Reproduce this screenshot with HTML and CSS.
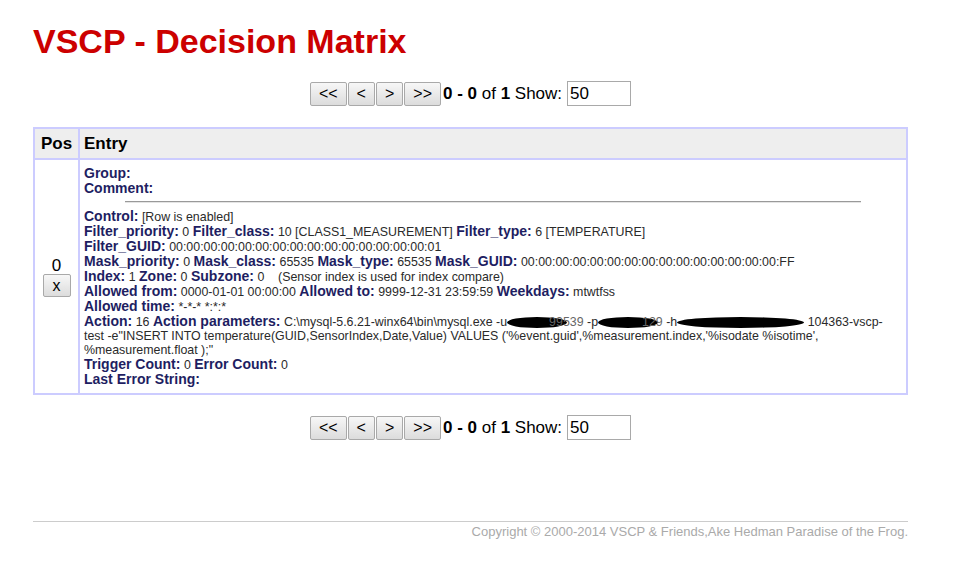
FILE: index.html
```html
<!DOCTYPE html>
<html>
<head>
<meta charset="utf-8">
<link rel="stylesheet" href="styles.css">
</head>
<body>
<div class="page">
  <h1 class="title">VSCP - Decision Matrix</h1>

  <div class="nav">
    <button class="btn">&lt;&lt;</button>
    <button class="btn">&lt;</button>
    <button class="btn">&gt;</button>
    <button class="btn">&gt;&gt;</button>
    <span class="navtext"><b>0 - 0</b> of <b>1</b> Show:</span>
    <input class="count" type="text" value="50">
  </div>

  <table class="matrix">
    <thead>
      <tr><th class="pos">Pos</th><th class="entry">Entry</th></tr>
    </thead>
    <tbody>
      <tr>
        <td class="pos">
          <div class="posnum">0</div>
          <button class="btn del">x</button>
        </td>
        <td class="entry">
          <div class="line"><b>Group:</b></div>
          <div class="line"><b>Comment:</b></div>
          <hr class="sep">
          <div class="line"><b>Control:</b> <span class="v">[Row is enabled]</span></div>
          <div class="line"><b>Filter_priority:</b> <span class="v">0</span> <b>Filter_class:</b> <span class="v">10 [CLASS1_MEASUREMENT]</span> <b>Filter_type:</b> <span class="v">6 [TEMPERATURE]</span></div>
          <div class="line"><b>Filter_GUID:</b> <span class="v">00:00:00:00:00:00:00:00:00:00:00:00:00:00:00:01</span></div>
          <div class="line"><b>Mask_priority:</b> <span class="v">0</span> <b>Mask_class:</b> <span class="v">65535</span> <b>Mask_type:</b> <span class="v">65535</span> <b>Mask_GUID:</b> <span class="v">00:00:00:00:00:00:00:00:00:00:00:00:00:00:00:FF</span></div>
          <div class="line"><b>Index:</b> <span class="v">1</span> <b>Zone:</b> <span class="v">0</span> <b>Subzone:</b> <span class="v">0 &nbsp;&nbsp; (Sensor index is used for index compare)</span></div>
          <div class="line"><b>Allowed from:</b> <span class="v">0000-01-01 00:00:00</span> <b>Allowed to:</b> <span class="v">9999-12-31 23:59:59</span> <b>Weekdays:</b> <span class="v">mtwtfss</span></div>
          <div class="line"><b>Allowed time:</b> <span class="v">*-*-* *:*:*</span></div>
          <div class="line"><b>Action:</b> <span class="v">16</span> <b>Action parameters:</b> <span class="v">C:\mysql-5.6.21-winx64\bin\mysql.exe -u<span class="blk"><span class="redact r1"></span><span class="faint">99539</span></span> -p<span class="blk"><span class="redact r2"></span><span class="faint">129</span></span> -h<span class="redact r3"></span> 104363-vscp-<br>test -e"INSERT INTO temperature(GUID,SensorIndex,Date,Value) VALUES ('%event.guid',%measurement.index,'%isodate %isotime',<br>%measurement.float );"</span></div>
          <div class="line"><b>Trigger Count:</b> <span class="v">0</span> <b>Error Count:</b> <span class="v">0</span></div>
          <div class="line"><b>Last Error String:</b></div>
        </td>
      </tr>
    </tbody>
  </table>

  <div class="nav nav-bottom">
    <button class="btn">&lt;&lt;</button>
    <button class="btn">&lt;</button>
    <button class="btn">&gt;</button>
    <button class="btn">&gt;&gt;</button>
    <span class="navtext"><b>0 - 0</b> of <b>1</b> Show:</span>
    <input class="count" type="text" value="50">
  </div>

  <footer class="footer">
    <div class="copy">Copyright © 2000-2014 VSCP &amp; Friends,Ake Hedman Paradise of the Frog.</div>
  </footer>
</div>
</body>
</html>
```

FILE: styles.css
```css
html, body {
  margin: 0;
  padding: 0;
  background: #ffffff;
}
body {
  font-family: "Liberation Sans", Arial, sans-serif;
  color: #000;
}
.page {
  width: 875px;
  margin-left: 33px;
}
.title {
  margin: 22px 0 0;
  font-size: 34px;
  line-height: 39px;
  font-weight: bold;
  color: #cc0000;
}
.nav {
  display: flex;
  justify-content: center;
  align-items: center;
  gap: 1px;
  margin-top: 20px;
  height: 25px;
}
.nav-bottom {
  margin-top: 20px;
}
.btn {
  font-family: "Liberation Sans", Arial, sans-serif;
  font-size: 16px;
  height: 24px;
  padding: 0 8px;
  margin: 0;
  color: #000;
  background: linear-gradient(#f7f7f7, #dcdcdc);
  border: 1px solid #a9a9a9;
  border-radius: 2px;
  line-height: 20px;
}
.navtext {
  font-size: 17px;
  margin: 0 4px 0 1px;
}
.count {
  width: 58px;
  height: 23px;
  padding: 0 2px;
  margin: 0;
  border: 1px solid #a9a9a9;
  font-family: "Liberation Sans", Arial, sans-serif;
  font-size: 17px;
  color: #000;
}
.matrix {
  width: 875px;
  margin-top: 21px;
  border-collapse: collapse;
  border: 2px solid #ccccff;
}
.matrix th, .matrix td {
  border: 2px solid #ccccff;
}
.matrix th {
  background: #eeeeee;
  font-size: 17px;
  font-weight: bold;
  padding: 6px 4px 5px;
  height: 18px;
  line-height: 18px;
}
.matrix th.entry {
  text-align: left;
}
.matrix td.pos {
  width: 35px;
  padding: 0 4px;
  text-align: center;
  vertical-align: middle;
}
.posnum {
  font-size: 17px;
  line-height: 19px;
  margin-bottom: -1px;
}
.btn.del {
  height: 23px;
  width: 28px;
  padding: 0;
  font-size: 16px;
}
.matrix td.entry {
  padding: 6px 4px 6px 4px;
  vertical-align: top;
}
.line {
  font-size: 12.4px;
  line-height: 14px;
}
.entry b {
  font-size: 14px;
  line-height: 15px;
  color: #1e1e62;
}
.v {
  font-size: 12.4px;
  color: #2a2a2a;
}
.sep {
  width: 90%;
  height: 0;
  margin: 5px auto 6px;
  border: 0;
  border-top: 1px solid #999999;
  border-bottom: 1px solid #e4e4e4;
}
.blk {
  display: inline-block;
  position: relative;
}
.redact {
  display: inline-block;
  height: 11px;
  background: #000;
  border-radius: 50%;
  vertical-align: -2px;
}
.r1 { width: 60px; margin-right: -18px; }
.r2 { width: 60px; margin-right: -16px; }
.r3 { width: 127px; }
.faint {
  color: #666;
}
.footer {
  margin-top: 81px;
  border-top: 1px solid #cccccc;
}
.copy {
  text-align: right;
  font-size: 13px;
  color: #aaaaaa;
  padding-top: 2px;
}
```
